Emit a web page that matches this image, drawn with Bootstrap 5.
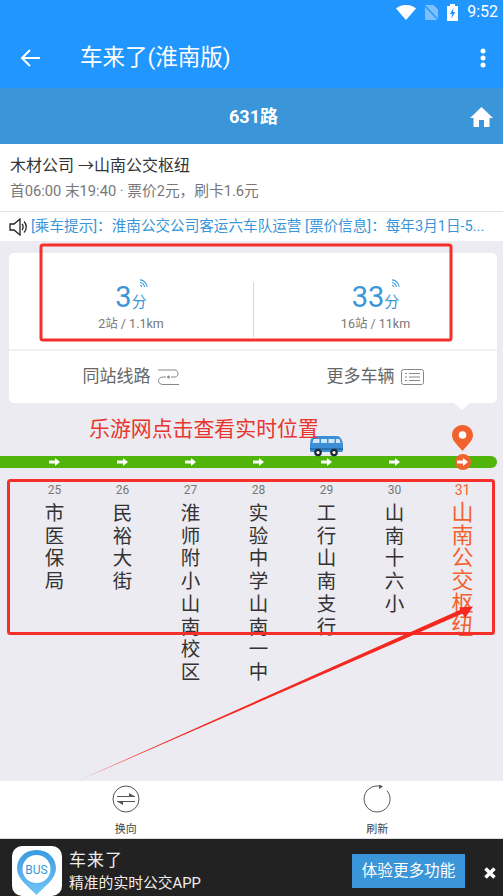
<!DOCTYPE html>
<html lang="zh">
<head>
    <meta charset="UTF-8">
    <meta name="viewport" content="width=device-width, initial-scale=1.0">
    <title>车来了(淮南版)</title>
    <link href="https://cdn.jsdelivr.net/npm/bootstrap@5.3.0/dist/css/bootstrap.min.css" rel="stylesheet">
    <style>
        html, body { height: 100%; overflow: hidden; }
        body { font-family: Roboto, "Noto Sans CJK SC", sans-serif; background: #ecebf1; color: #333; }
        .page-wrap { position: relative; height: 896px; }
        .status-bar { height: 34px; background: #2196ff; color: #fff; font-size: 16px; padding: 0 5px 10px 0; }
        .status-bar svg { margin-right: 9px; }
        .app-bar { height: 54px; background: #2196ff; color: #fff; font-size: 22.5px; padding: 0 17px 7px 20px; }
        .app-title { margin-left: 40px; }
        .line-head { height: 56px; background: #3a96d8; color: #fff; font-size: 18px; font-weight: 700; position: relative; padding-left: 4px; }
        .home-icon { position: absolute; right: 10px; top: 19px; }
        .info-box { height: 68px; background: #fff; padding: 10px 10px 0; border-bottom: 1px solid #e4e4e4; }
        .info-route { font-size: 16px; line-height: 24px; color: #333; }
        .info-sub { font-size: 14.7px; line-height: 20px; color: #777; margin-top: 3px; }
        .notice-box { height: 29px; background: #fff; padding: 1px 0 0 9px; gap: 3px; font-size: 14.6px; color: #3a96d8; }
        .notice-text { white-space: nowrap; }
        .eta-card { margin: 12px 6px 0 9px; background: #fff; border-radius: 5px; position: relative; height: 150px; }
        .eta-row { height: 98px; border-bottom: 2px solid #f1f1f1; padding-top: 29px; }
        .eta-col { width: 50%; text-align: center; height: 55px; }
        .eta-col + .eta-col { border-left: 1px solid #d8d8d8; }
        .eta-num { font-size: 29px; line-height: 30px; color: #3a96d8; position: relative; display: inline-block; }
        .eta-unit { font-size: 15px; }
        .eta-sig { position: absolute; right: -1px; top: -3px; }
        .eta-dist { font-size: 12.5px; line-height: 16px; color: #777; margin-top: -1px; }
        .link-row { height: 50px; font-size: 17px; color: #666; padding-top: 2px; }
        .link-col { width: 50%; gap: 6px; }
        .card-tip { position: absolute; right: 27px; bottom: -7px; width: 0; height: 0; border-left: 8px solid transparent; border-right: 8px solid transparent; border-top: 7px solid #fff; }
        .map-area { height: 53px; position: relative; flex: none; }
        .bus-icon { position: absolute; left: 309px; top: 33px; }
        .pin-icon { position: absolute; left: 452px; top: 22px; }
        .green-line { margin-right: 6px; height: 12px; background: #50b40a; border-radius: 0 6px 6px 0; }
        .stop-grid { display: grid; grid-template-columns: repeat(7, 68px); padding-left: 20.5px; }
        .flow-cell { height: 12px; }
        .end-dot { width: 16px; height: 16px; background: #f2622e; border-radius: 50%; }
        .stop-cell { text-align: center; padding-top: 14px; color: #333; }
        .stop-num { font-size: 12px; line-height: 16px; color: #777; }
        .stop-name { font-size: 19.5px; line-height: 22.7px; width: 20px; margin: 5px auto 0; word-break: break-all; }
        .stop-end .stop-num { font-size: 14px; color: #f2622e; }
        .stop-end .stop-name { font-size: 22px; color: #f2622e; width: 23px; margin-top: 4px; }
        .tool-bar { position: absolute; left: 0; right: 0; top: 781px; height: 57px; background: #fff; font-size: 11px; color: #444; }
        .tool-col { width: 50%; text-align: center; padding-top: 4px; }
        .tool-label { line-height: 14px; margin-top: 10px; }
        .promo-bar { position: absolute; left: 0; right: 0; top: 838px; height: 58px; background: #222; border-top: 1px solid #ddd; color: #eee; }
        .promo-logo { position: absolute; left: 12px; top: 7px; width: 50px; height: 50px; background: #fff; border-radius: 10px; }
        .promo-text { position: absolute; left: 69px; top: 8px; }
        .promo-title { font-size: 17px; line-height: 26px; letter-spacing: 1px; }
        .promo-sub { font-size: 14.8px; line-height: 20px; }
        .promo-btn { position: absolute; left: 352px; top: 15px; width: 113px; height: 34px; background: #3a96d8; color: #fff; font-size: 15.6px; line-height: 34px; text-align: center; }
        .promo-close { position: absolute; left: 484px; top: 28px; }
        .note-layer { position: absolute; left: 0; top: 0; width: 503px; height: 896px; pointer-events: none; }
        .note-text { position: absolute; left: 89px; top: 414px; font-size: 20.9px; line-height: 30px; color: #e8352e; white-space: nowrap; }
    </style>
</head>
<body>
    <div class="page-wrap">
        <!-- status bar -->
        <div class="status-bar d-flex justify-content-end align-items-center">
            <svg width="20" height="15" viewBox="0 0 20 15"><path d="M0 3.500C5.500-1.200 14.500-1.200 20 3.500L10 15Z" fill="#fff"/></svg>
            <svg width="13" height="15" viewBox="0 0 13 15"><path d="M0 0H8.500L13 4.500V15H0Z" fill="#7fbffa"/><path d="M0 1L13 14.500" stroke="#2196ff" stroke-width="1.500"/></svg>
            <svg width="11" height="17" viewBox="0 0 11 17"><path d="M3 0H8V2H11V17H0V2H3Z" fill="#fff"/><path d="M6.500 4L2.800 10H5L4.300 14.500L8.300 8H6Z" fill="#2196ff"/></svg>
            <span>9:52</span>
        </div>
        <!-- app bar -->
        <div class="app-bar d-flex align-items-center">
            <svg width="20" height="18" viewBox="0 0 20 18" fill="none" stroke="#fff" stroke-width="2"><path d="M20 9H2M10 1L2 9L10 17"/></svg>
            <span class="app-title flex-grow-1">车来了(淮南版)</span>
            <svg width="6" height="20" viewBox="0 0 6 20" fill="#fff"><circle cx="3" cy="3" r="2.500"/><circle cx="3" cy="10" r="2.500"/><circle cx="3" cy="17" r="2.500"/></svg>
        </div>
        <div class="line-head d-flex justify-content-center align-items-center">
            631路
            <svg class="home-icon" width="23" height="20" viewBox="0 0 23 20" fill="#fff"><path d="M11.500 0L23 11H19.500V20H14V13H9V20H3.500V11H0Z"/></svg>
        </div>
        <div class="info-box">
            <div class="info-route">木材公司 →山南公交枢纽</div>
            <div class="info-sub">首06:00 末19:40 · 票价2元，刷卡1.6元</div>
        </div>
        <div class="notice-box d-flex align-items-center">
            <svg width="19" height="18" viewBox="0 0 19 18" fill="none" stroke="#222" stroke-width="1.300" class="flex-shrink-0"><path d="M1 6H5L11 1V17L5 12H1Z"/><path d="M13 6C14.500 7.500 14.500 10.500 13 12M15 3.500C18 6.500 18 11.500 15 14.500"/></svg>
            <div class="notice-text">[乘车提示]：淮南公交公司客运六车队运营 [票价信息]：每年3月1日-5...</div>
        </div>
        <!-- eta card -->
        <div class="eta-card">
            <div class="eta-row d-flex">
                <div class="eta-col">
                    <div class="eta-num">3<span class="eta-unit">分</span>
                        <svg class="eta-sig" width="8" height="8" viewBox="0 0 9 9" fill="none" stroke="#3a96d8" stroke-width="1.200"><path d="M0 1C4 1 8 5 8 9M0 4C2.500 4 5 6.500 5 9M0 7C1 7 2 8 2 9"/></svg>
                    </div>
                    <div class="eta-dist">2站 / 1.1km</div>
                </div>
                <div class="eta-col">
                    <div class="eta-num">33<span class="eta-unit">分</span>
                        <svg class="eta-sig" width="8" height="8" viewBox="0 0 9 9" fill="none" stroke="#3a96d8" stroke-width="1.200"><path d="M0 1C4 1 8 5 8 9M0 4C2.500 4 5 6.500 5 9M0 7C1 7 2 8 2 9"/></svg>
                    </div>
                    <div class="eta-dist">16站 / 11km</div>
                </div>
            </div>
            <div class="link-row d-flex">
                <div class="link-col d-flex justify-content-center align-items-center">
                    同站线路
                    <svg width="23" height="17" viewBox="0 0 23 17" fill="none" stroke="#888" stroke-width="1"><path d="M1 1H18C22 1 22 8 18 8H14M9 8H6C0 8 0 15.500 6 15.500H22"/><circle cx="11.500" cy="8" r="1" fill="#888"/></svg>
                </div>
                <div class="link-col d-flex justify-content-center align-items-center">
                    更多车辆
                    <svg width="23" height="16" viewBox="0 0 23 16" fill="none" stroke="#888" stroke-width="1"><rect x="0.500" y="0.500" width="22" height="15" rx="2"/><path d="M4 4.500H6M8 4.500H19M4 8H6M8 8H19M4 11.500H6M8 11.500H19"/></svg>
                </div>
            </div>
            <div class="card-tip"></div>
        </div>
        <!-- line -->
        <div class="map-area">
            <svg class="bus-icon" width="35" height="21" viewBox="0 0 35 21">
                <path d="M6 0H28C31 0 33 3 34 8V14C34 15.500 33 16 32 16H3C1.500 16 1 15.500 1 14V8C1.500 3 3 0 6 0Z" fill="#3c8fd6"/>
                <path d="M4.500 3H10.500V7H3.500ZM12 3H18V7H12ZM19.500 3H25.500V7H19.500ZM27 3H30.500L31.500 7H27Z" fill="#cfe6f7"/>
                <rect x="1" y="12" width="33" height="2" fill="#2a6fae"/>
                <circle cx="9" cy="16.500" r="3.800" fill="#1c2a38"/><circle cx="9" cy="16.500" r="1.500" fill="#fff"/>
                <circle cx="25" cy="16.500" r="3.800" fill="#1c2a38"/><circle cx="25" cy="16.500" r="1.500" fill="#fff"/>
            </svg>
            <svg class="pin-icon" width="21" height="26" viewBox="0 0 21 26"><path d="M10.500 0C16.300 0 21 4.500 21 10.300C21 16 14.500 21 10.500 26C6.500 21 0 16 0 10.300C0 4.500 4.700 0 10.500 0Z" fill="#f2622e"/><circle cx="10.500" cy="10" r="3.800" fill="#fff"/></svg>
        </div>
        <div class="green-line stop-grid" id="flow-row"></div>
        <div class="stop-grid" id="stop-row"></div>
        <!-- bottom tools -->
        <div class="tool-bar d-flex">
            <div class="tool-col">
                <svg width="28" height="28" viewBox="0 0 28 28" fill="none" stroke="#555" stroke-width="1"><circle cx="14" cy="14" r="13"/><path d="M5 11.500H23M5 16.500H23"/><path d="M23 11.500L17 8V11.500ZM5 16.500L11 20V16.500Z" fill="#555" stroke="none"/></svg>
                <div class="tool-label">换向</div>
            </div>
            <div class="tool-col">
                <svg width="28" height="28" viewBox="0 0 28 28" fill="none" stroke="#555" stroke-width="1"><path d="M16.500 1.200A13 13 0 0 0 14 1A13 13 0 1 0 24 5.600"/><path d="M16 -0.500L20 1.500L16 4Z" fill="#555" stroke="none"/></svg>
                <div class="tool-label">刷新</div>
            </div>
        </div>
        <!-- promo -->
        <div class="promo-bar">
            <div class="promo-logo">
                <svg width="50" height="50" viewBox="0 0 50 50">
                    <defs><linearGradient id="pin-fill" x1="0" y1="0" x2="0" y2="1"><stop offset="0" stop-color="#3a9be0"/><stop offset="1" stop-color="#72c4f6"/></linearGradient></defs>
                    <path d="M24.500 4C37 4 44 13 44 22.500C44 33 32 41 24.500 49C17 41 5 33 5 22.500C5 13 12 4 24.500 4Z" fill="url(#pin-fill)"/>
                    <circle cx="24.500" cy="23" r="14" fill="#fff"/>
                    <text x="24.500" y="27.500" text-anchor="middle" font-family="Roboto, sans-serif" font-size="12" fill="#3a96d8">BUS</text>
                </svg>
            </div>
            <div class="promo-text">
                <div class="promo-title">车来了</div>
                <div class="promo-sub">精准的实时公交APP</div>
            </div>
            <div class="promo-btn">体验更多功能</div>
            <svg class="promo-close" width="12" height="12" viewBox="0 0 12 12" fill="none" stroke="#fff" stroke-width="3.500"><path d="M1.500 1.500L10.500 10.500M10.500 1.500L1.500 10.500"/></svg>
        </div>
        <!-- red annotations drawn on top of the shot -->
        <div class="note-text">乐游网点击查看实时位置</div>
        <svg class="note-layer" viewBox="0 0 503 896" fill="none">
            <rect x="41" y="245" width="410" height="95" rx="2" stroke="#f5302a" stroke-width="3"/>
            <rect x="8.500" y="480.500" width="485" height="153" rx="2" stroke="#f5302a" stroke-width="3"/>
            <path d="M80 780L462 609L464 613Z" fill="#f5281f"/>
            <path d="M473 606.500L459 607.500L465 618Z" fill="#f5281f"/>
        </svg>
    </div>

    <script src="https://cdn.jsdelivr.net/npm/bootstrap@5.3.0/dist/js/bootstrap.bundle.min.js"></script>
    <script>
        const stops = [
            { num: 25, name: '市医保局' },
            { num: 26, name: '民裕大街' },
            { num: 27, name: '淮师附小山南校区' },
            { num: 28, name: '实验中学山南一中' },
            { num: 29, name: '工行山南支行' },
            { num: 30, name: '山南十六小' },
            { num: 31, name: '山南公交枢纽' }
        ];

        const arrow = '<svg width="11" height="8" viewBox="0 0 11 8" fill="#fff"><path d="M0 2.500H6V0L11 4L6 8V5.500H0Z"/></svg>';
        const flowRow = document.getElementById('flow-row');
        const stopRow = document.getElementById('stop-row');

        stops.forEach((stop, index) => {
            const isEnd = index === stops.length - 1;
            const flow = document.createElement('div');
            flow.className = 'flow-cell d-flex justify-content-center align-items-center';
            flow.innerHTML = isEnd ? `<div class="end-dot d-flex justify-content-center align-items-center flex-shrink-0">${arrow}</div>` : arrow;
            flowRow.appendChild(flow);

            const cell = document.createElement('div');
            cell.className = isEnd ? 'stop-cell stop-end' : 'stop-cell';
            cell.innerHTML = `<div class="stop-num">${stop.num}</div><div class="stop-name">${stop.name}</div>`;
            stopRow.appendChild(cell);
        });
    </script>
</body>
</html>
